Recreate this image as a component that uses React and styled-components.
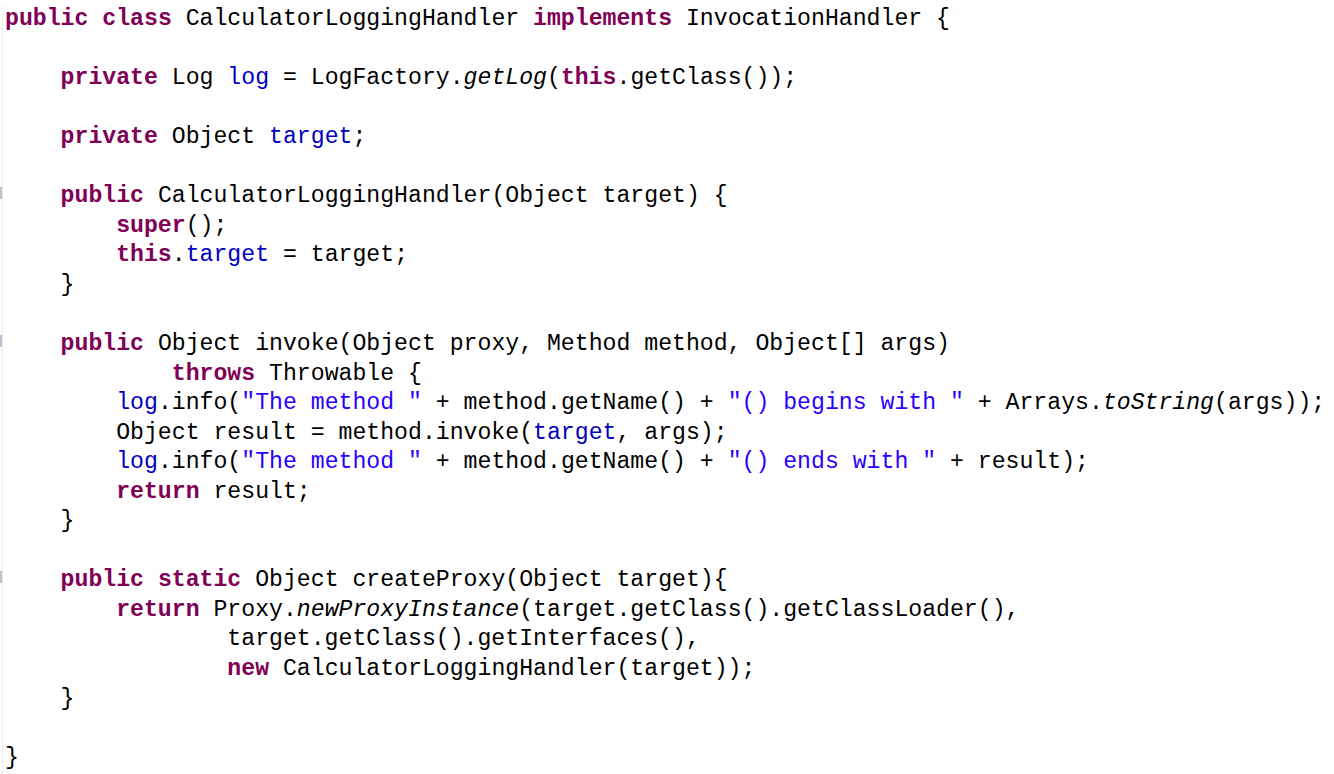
import styled, { createGlobalStyle } from 'styled-components';

const GlobalStyle = createGlobalStyle`
    html, body {
        margin: 0;
        padding: 0;
        background: #fff;
    }
`;

const Editor = styled.pre`
    margin: 0;
    padding: 5px 0 0 0;
    width: 1334px;
    height: 774px;
    box-sizing: border-box;
    overflow: hidden;
    background: #fff;
    font-family: "Liberation Mono", "Courier New", monospace;
    font-size: 23.17px;
    line-height: 29.56px;
    color: #000;
`;

const Line = styled.div`
    display: flex;
    height: 29.56px;
    white-space: pre;
`;

const Gutter = styled.span`
    flex: none;
    width: 2px;
    margin-right: 2px;
    border-right: 1px solid #f3eddd;
    position: relative;

    &::before {
        content: '';
        display: ${p => (p.$fold ? 'block' : 'none')};
        position: absolute;
        left: 0;
        top: 5px;
        width: 2px;
        height: 12px;
        background: #b6c3d6;
    }
`;

const Kw = styled.span`
    color: #7f0055;
    font-weight: bold;
`;

const Field = styled.span`
    color: #0000c0;
`;

const Str = styled.span`
    color: #2a00ff;
`;

const StaticCall = styled.span`
    font-style: italic;
`;

const Code = styled.span``;

function Row({ fold, indent = 0, children }) {
    return (
        <Line>
            <Gutter $fold={fold} />
            <Code>{' '.repeat(indent)}{children}</Code>
        </Line>
    );
}

export default function App() {
    return (
        <>
            <GlobalStyle />
            <Editor>
                <Row>
                    <Kw>public</Kw> <Kw>class</Kw> CalculatorLoggingHandler <Kw>implements</Kw> InvocationHandler {'{'}
                </Row>
                <Row />
                <Row indent={4}>
                    <Kw>private</Kw> Log <Field>log</Field> = LogFactory.<StaticCall>getLog</StaticCall>(<Kw>this</Kw>.getClass());
                </Row>
                <Row />
                <Row indent={4}>
                    <Kw>private</Kw> Object <Field>target</Field>;
                </Row>
                <Row />
                <Row indent={4} fold>
                    <Kw>public</Kw> CalculatorLoggingHandler(Object target) {'{'}
                </Row>
                <Row indent={8}>
                    <Kw>super</Kw>();
                </Row>
                <Row indent={8}>
                    <Kw>this</Kw>.<Field>target</Field> = target;
                </Row>
                <Row indent={4}>{'}'}</Row>
                <Row />
                <Row indent={4} fold>
                    <Kw>public</Kw> Object invoke(Object proxy, Method method, Object[] args)
                </Row>
                <Row indent={12}>
                    <Kw>throws</Kw> Throwable {'{'}
                </Row>
                <Row indent={8}>
                    <Field>log</Field>.info(<Str>"The method "</Str> + method.getName() + <Str>"() begins with "</Str> + Arrays.<StaticCall>toString</StaticCall>(args));
                </Row>
                <Row indent={8}>
                    Object result = method.invoke(<Field>target</Field>, args);
                </Row>
                <Row indent={8}>
                    <Field>log</Field>.info(<Str>"The method "</Str> + method.getName() + <Str>"() ends with "</Str> + result);
                </Row>
                <Row indent={8}>
                    <Kw>return</Kw> result;
                </Row>
                <Row indent={4}>{'}'}</Row>
                <Row />
                <Row indent={4} fold>
                    <Kw>public</Kw> <Kw>static</Kw> Object createProxy(Object target){'{'}
                </Row>
                <Row indent={8}>
                    <Kw>return</Kw> Proxy.<StaticCall>newProxyInstance</StaticCall>(target.getClass().getClassLoader(),
                </Row>
                <Row indent={16}>target.getClass().getInterfaces(),</Row>
                <Row indent={16}>
                    <Kw>new</Kw> CalculatorLoggingHandler(target));
                </Row>
                <Row indent={4}>{'}'}</Row>
                <Row />
                <Row>{'}'}</Row>
            </Editor>
        </>
    );
}
